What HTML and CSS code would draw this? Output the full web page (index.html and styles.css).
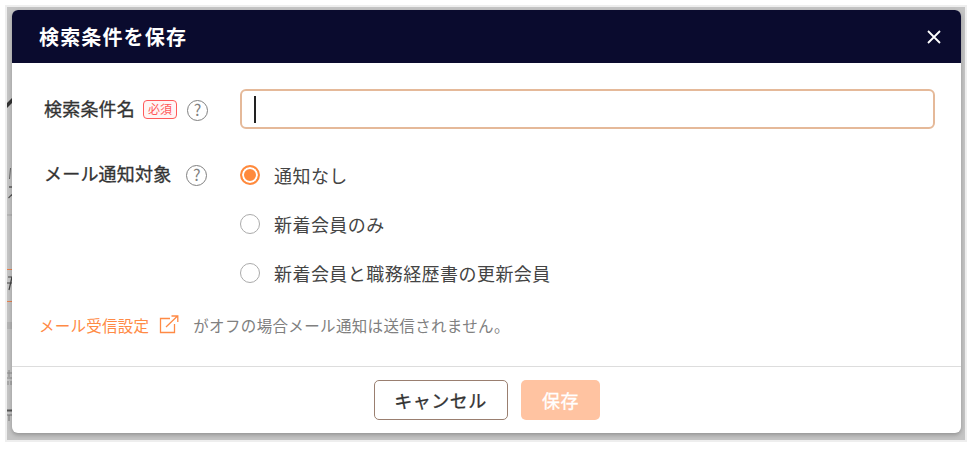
FILE: index.html
```html
<!DOCTYPE html>
<html lang="ja">

<head>
    <meta charset="UTF-8">
    <meta name="viewport" content="width=device-width, initial-scale=1.0">
    <title>検索条件を保存</title>
    <link rel="stylesheet" href="styles.css">
</head>

<body>
    <div class="overlay">
        <!-- bits of the page behind the dialog -->
        <svg class="peek" width="5" height="430" viewBox="0 0 5 430">
            <path d="M0 96L5 91V96L0 101Z" fill="#333" />
            <path d="M3.5 161L2.5 172" stroke="#666" stroke-width="1" fill="none" />
            <path d="M2 180H5" stroke="#444" stroke-width="1.2" fill="none" />
            <path d="M1.5 191L5 187.5" stroke="#555" stroke-width="1.2" fill="none" />
            <path d="M0 208H5" stroke="#a5a5a5" stroke-width="1" fill="none" />
            <path d="M0 262.5H5" stroke="#e8824f" stroke-width="1" fill="none" />
            <path d="M1 270H5M5 270L2 283M0 276H5" stroke="#444" stroke-width="1.2" fill="none" />
            <path d="M0 294.5H5" stroke="#e8824f" stroke-width="1" fill="none" />
            <path d="M0 315H5V322H0Z" fill="#b4b4b4" />
            <path d="M2 363V370M0 366H5M0 371H5M1 374V378M4 374V378" stroke="#8a8a8a" stroke-width="1" fill="none" />
            <path d="M0 403.5H5" stroke="#555" stroke-width="2" fill="none" />
            <path d="M0 408H5M2 408V414" stroke="#777" stroke-width="1" fill="none" />
        </svg>

        <div class="modal">
            <div class="modalHead">
                <div class="modalTitle">検索条件を保存</div>
                <svg class="closeIcon" width="14" height="14" viewBox="0 0 14 14">
                    <path d="M1 1L13 13M13 1L1 13" stroke="#fff" stroke-width="1.8" fill="none" />
                </svg>
            </div>

            <div class="modalBody">
                <div class="row nameRow">
                    <div class="label">
                        <span class="labelText">検索条件名</span>
                        <span class="required">必須</span>
                        <span class="help">?</span>
                    </div>
                    <div class="inputBox"><span class="caret"></span></div>
                </div>

                <div class="row mailRow">
                    <div class="label">
                        <span class="labelText">メール通知対象</span>
                        <span class="help">?</span>
                    </div>
                    <div class="radios">
                        <div class="radio"><span class="dot on"></span>通知なし</div>
                        <div class="radio"><span class="dot"></span>新着会員のみ</div>
                        <div class="radio"><span class="dot"></span>新着会員と職務経歴書の更新会員</div>
                    </div>
                </div>

                <div class="note">
                    <span class="noteLink">メール受信設定</span>
                    <svg class="linkIcon" width="20" height="19" viewBox="0 0 20 19">
                        <path d="M11 3.5H1.5V17.5H15.5V9" stroke="#ff8a45" stroke-width="1.3" fill="none" />
                        <path d="M7 12L18 1.5M12.5 1H18.8V7" stroke="#ff8a45" stroke-width="1.3" fill="none" />
                    </svg>
                    <span class="noteText">がオフの場合メール通知は送信されません。</span>
                </div>
            </div>

            <div class="modalFoot">
                <button class="btn cancel">キャンセル</button>
                <button class="btn save">保存</button>
            </div>
        </div>
    </div>
</body>

</html>
```

FILE: styles.css
```css
body {
    margin: 0;
    background: #fff;
    font-family: "Noto Sans CJK JP", "Noto Sans", sans-serif;
    color: #333;
}

.overlay {
    position: relative;
    box-sizing: border-box;
    width: 962px;
    height: 437px;
    margin: 5px 0 0 5px;
    padding: 3px 0 0 5px;
    border: 2px solid #eeeeee;
    background: #c4c4c4;
}

.peek {
    position: absolute;
    left: 0;
    top: 0;
}

.modal {
    position: relative;
    width: 949px;
    height: 423px;
    display: flex;
    flex-direction: column;
    border-radius: 6px;
    background: #fff;
    box-shadow: 0 2px 4px rgba(0, 0, 0, 0.25);
    overflow: hidden;
}

.modalHead {
    height: 53px;
    flex: none;
    display: flex;
    align-items: center;
    justify-content: space-between;
    padding: 0 20px 0 27px;
    background: #0a0b2e;
}

.modalTitle {
    font-size: 20px;
    font-weight: 700;
    letter-spacing: 1.15px;
    color: #fff;
}

.modalBody {
    flex: 1;
    padding: 27px 26px 0 32px;
}

.row {
    display: flex;
}

.label {
    width: 196px;
    flex: none;
    display: flex;
    align-items: center;
    height: 40px;
}

.labelText {
    font-size: 18px;
    letter-spacing: 0.2px;
    -webkit-text-stroke: 0.3px #333;
    white-space: nowrap;
    margin-top: -5px;
}

.required {
    box-sizing: border-box;
    width: 34px;
    height: 19px;
    margin-left: 8px;
    margin-top: -1px;
    border: 1.5px solid #ff5a5a;
    border-radius: 4px;
    background: #fff5f5;
    color: #ff5a5a;
    font-size: 12px;
    line-height: 16px;
    text-align: center;
}

.help {
    box-sizing: border-box;
    width: 21px;
    height: 21px;
    margin-left: 10px;
    border: 1.5px solid #808080;
    border-radius: 50%;
    color: #808080;
    font-size: 16px;
    line-height: 17px;
    text-align: center;
}

.mailRow .help {
    margin-left: 15px;
}

.inputBox {
    box-sizing: border-box;
    width: 695px;
    height: 40px;
    margin-top: -1px;
    display: flex;
    align-items: center;
    padding-left: 12px;
    border: 2px solid #e5b999;
    border-radius: 6px;
}

.caret {
    width: 1.5px;
    height: 27px;
    background: #222;
}

.mailRow {
    margin-top: 25px;
}

.radios {
    display: flex;
    flex-direction: column;
    gap: 9px;
}

.radio {
    height: 40px;
    display: flex;
    align-items: center;
    font-size: 18px;
    letter-spacing: 0.45px;
    color: #444;
    white-space: nowrap;
}

.dot {
    box-sizing: border-box;
    width: 20px;
    height: 20px;
    margin-right: 14px;
    border: 1.5px solid #aaa;
    border-radius: 50%;
    background: #fff;
}

.dot.on {
    border: 2px solid #ff8a3d;
    box-shadow: inset 0 0 0 2px #fff;
    background: #ff8a3d;
}

.note {
    display: flex;
    align-items: center;
    height: 30px;
    margin-top: 17px;
    margin-left: -5px;
    font-size: 15.5px;
}

.noteLink {
    color: #ff8a45;
    letter-spacing: 0.25px;
}

.linkIcon {
    margin: -2px 14px 0 10px;
}

.noteText {
    color: #808080;
    letter-spacing: 0.35px;
}

.modalFoot {
    height: 66px;
    flex: none;
    display: flex;
    justify-content: center;
    align-items: center;
    gap: 13px;
    border-top: 1px solid #dddddd;
}

.btn {
    height: 40px;
    border-radius: 5px;
    font-family: inherit;
    font-size: 18px;
    letter-spacing: 0.5px;
    -webkit-text-stroke: 0.3px;
    padding: 0;
}

.cancel {
    width: 134px;
    border: 1.5px solid #9a7f70;
    background: #fff;
    color: #333;
}

.save {
    width: 79px;
    padding-left: 1px;
    border: 0;
    background: #ffc3a1;
    color: #fff;
}
```
